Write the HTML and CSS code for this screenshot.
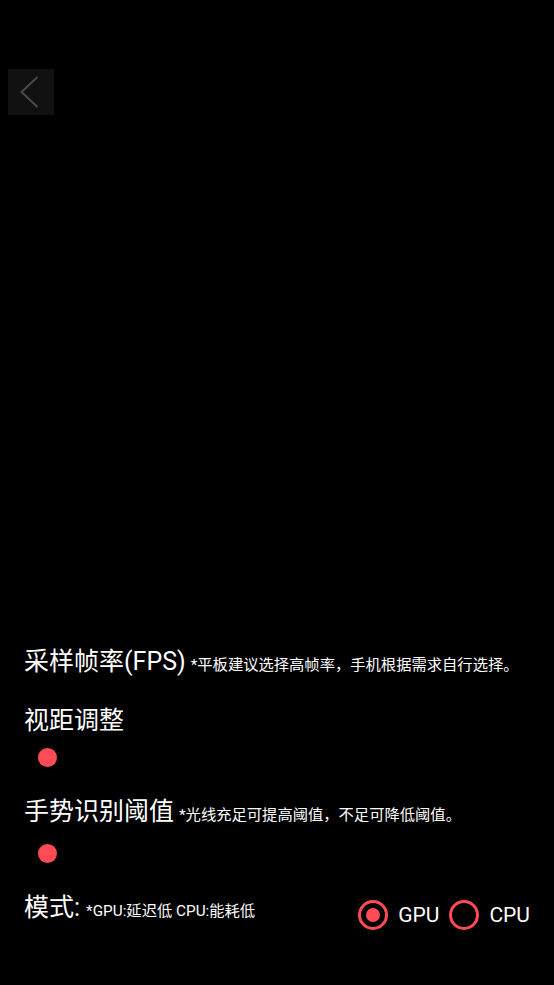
FILE: index.html
```html
<!DOCTYPE html>
<html lang="zh-CN">
<head>
<meta charset="utf-8">
<title>设置</title>
<link rel="stylesheet" href="styles.css">
</head>
<body>
<div class="screen">
  <div class="back" aria-label="返回">
    <svg width="46" height="46" viewBox="0 0 46 46"><polyline points="29.5,8 13.5,23 29.5,38" fill="none" stroke="#4a4a4a" stroke-width="2"/></svg>
  </div>
  <div class="settings">
    <div class="title">采样帧率(FPS)<span class="note note-fps">*平板建议选择高帧率，手机根据需求自行选择。</span></div>
    <div class="title title-distance">视距调整</div>
    <div class="slider slider-distance"><span class="thumb"></span></div>
    <div class="title title-gesture">手势识别阈值<span class="note note-gesture">*光线充足可提高阈值，不足可降低阈值。</span></div>
    <div class="slider slider-gesture"><span class="thumb"></span></div>
    <div class="mode-row">
      <div class="title">模式:<span class="note note-mode">*GPU:延迟低 CPU:能耗低</span></div>
      <div class="radios">
        <label class="radio checked"><span class="circle"></span><span class="label">GPU</span></label>
        <label class="radio"><span class="circle"></span><span class="label">CPU</span></label>
      </div>
    </div>
  </div>
</div>
</body>
</html>
```

FILE: styles.css
```css
html, body {
  margin: 0;
  padding: 0;
  background: #000;
}
body {
  font-family: Roboto, "Noto Sans CJK SC", sans-serif;
  color: #fff;
}
.screen {
  height: 985px;
  display: flex;
  flex-direction: column;
}
.back {
  margin: 69px 0 0 8px;
  width: 46px;
  height: 46px;
  background: #111111;
}
.back svg {
  display: block;
}
.settings {
  margin-top: auto;
  padding: 0 24px 55px 24px;
  display: flex;
  flex-direction: column;
}
.title {
  font-size: 25px;
  line-height: 25px;
  white-space: nowrap;
}
.title-distance {
  margin-top: 30px;
}
.title-gesture {
  margin-top: 32px;
}
.note {
  font-size: 15.3px;
}
.note-fps {
  margin-left: 5px;
}
.note-gesture {
  margin-left: 5px;
}
.note-mode {
  margin-left: 6px;
}
.slider {
  height: 19px;
  display: flex;
}
.slider-distance {
  margin-top: 15px;
}
.slider-gesture {
  margin-top: 16px;
}
.thumb {
  margin-left: 14px;
  width: 19px;
  height: 19px;
  border-radius: 50%;
  background: #ff4b53;
}
.mode-row {
  margin-top: 32px;
  display: flex;
  justify-content: space-between;
  align-items: flex-start;
}
.radios {
  margin-top: 5px;
  display: flex;
  gap: 10px;
}
.radio {
  display: flex;
  align-items: center;
  gap: 10px;
}
.circle {
  box-sizing: border-box;
  width: 30px;
  height: 30px;
  border: 3px solid #ff4b53;
  border-radius: 50%;
  display: flex;
  align-items: center;
  justify-content: center;
}
.radio.checked .circle::after {
  content: "";
  width: 14px;
  height: 14px;
  border-radius: 50%;
  background: #ff4b53;
}
.label {
  font-size: 21px;
  line-height: 30px;
}
```
